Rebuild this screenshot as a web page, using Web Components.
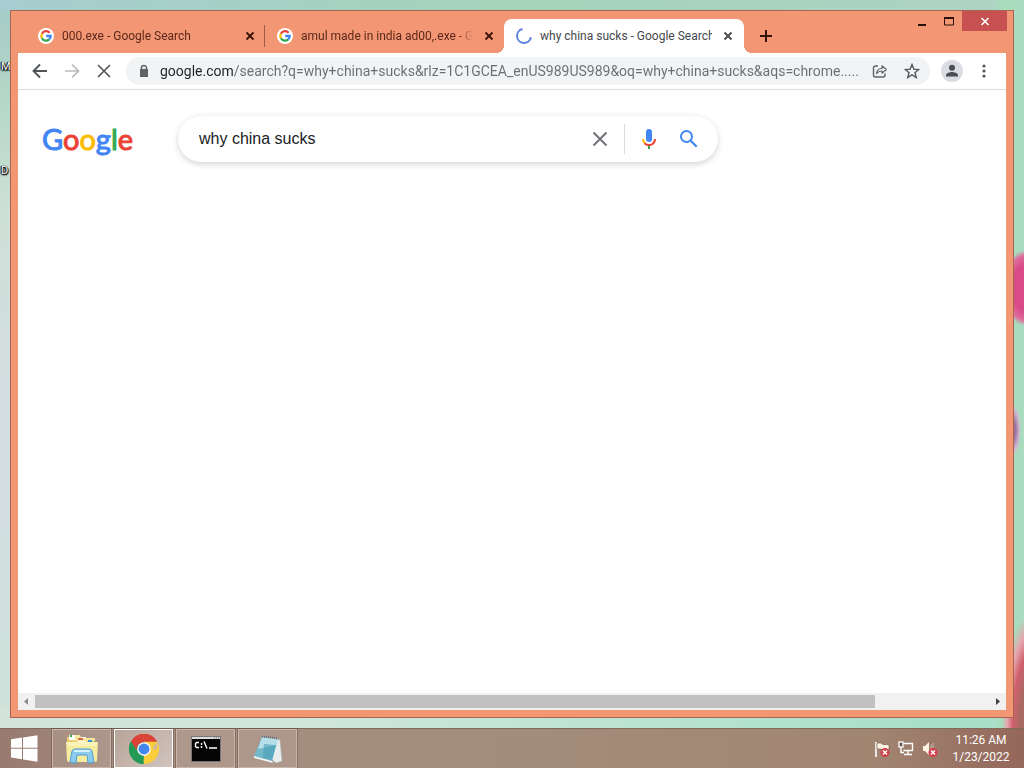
<!DOCTYPE html>
<html lang="en">
<head>
<meta charset="utf-8">
<title>why china sucks - Google Search</title>
<style>
html,body{margin:0;height:100%}
body{font-family:Roboto,"Open Sans",sans-serif;font-size:12px;color:#202124;overflow:hidden}
</style>
</head>
<body>
<desk-top>
  <desk-label slot="labels" style="--row:58px">M</desk-label>
  <desk-label slot="labels" style="--row:162px">D</desk-label>
  <browser-window>
    <browser-tab slot="tabs"><ui-icon slot="icon" name="g"></ui-icon>000.exe - Google Search</browser-tab>
    <browser-tab slot="tabs"><ui-icon slot="icon" name="g"></ui-icon>amul made in india ad00,.exe - Google Search</browser-tab>
    <browser-tab slot="tabs" active><ui-icon slot="icon" name="spinner"></ui-icon>why china sucks - Google Search</browser-tab>
    <tool-bar slot="toolbar"></tool-bar>
    <search-page></search-page>
    <scroll-strip slot="scroll"></scroll-strip>
  </browser-window>
  <task-bar slot="taskbar">
    <task-button><ui-icon name="explorer"></ui-icon></task-button>
    <task-button active><ui-icon name="chrome"></ui-icon></task-button>
    <task-button><ui-icon name="cmd"></ui-icon></task-button>
    <task-button><ui-icon name="notepad"></ui-icon></task-button>
    <ui-icon slot="tray" name="flag"></ui-icon>
    <ui-icon slot="tray" name="network"></ui-icon>
    <ui-icon slot="tray" name="speaker"></ui-icon>
    <task-clock slot="clock"></task-clock>
  </task-bar>
</desk-top>
<script>
const badge = '<circle cx="11" cy="11.500" r="4.500" fill="#d2404c"/><path d="M9 9.500l4 4M13 9.500l-4 4" stroke="#fff" stroke-width="1.400"/>';
// name: [width, height, viewBox, shapes]
const ICONS = {
  g:[16,16,'0 0 16 16','<circle cx="8" cy="8" r="8" fill="#fff"/><g fill="none" stroke-width="2.300"><path d="M11.600 4.800A4.700 4.700 0 0 0 3.900 5.700" stroke="#ea4335"/><path d="M3.900 5.700a4.700 4.700 0 0 0 0 4.600" stroke="#fbbc05"/><path d="M3.900 10.300a4.700 4.700 0 0 0 7.300 1.100" stroke="#34a853"/><path d="M11.200 11.400A4.700 4.700 0 0 0 12.700 8H8.200" stroke="#4285f4"/></g>'],
  spinner:[16,16,'0 0 16 16','<path d="M6.500 1.100A7 7 0 1 0 14.900 9.200" fill="none" stroke="#5b83dc" stroke-width="2"/>'],
  close:[16,16,'0 0 16 16','<path d="M4.500 4.500l7 7M11.500 4.500l-7 7" stroke="currentColor" stroke-width="1.800"/>'],
  plus:[16,16,'0 0 16 16','<path d="M8 2v12M2 8h12" stroke="#33130c" stroke-width="2"/>'],
  back:[20,20,'0 0 20 20','<path d="M17 10H4M10 3.500L3.500 10l6.500 6.500" fill="none" stroke="#505357" stroke-width="1.900"/>'],
  forward:[20,20,'0 0 20 20','<path d="M3 10h13M10 3.500l6.500 6.500L10 16.500" fill="none" stroke="#b9bbbd" stroke-width="1.700"/>'],
  stop:[20,20,'0 0 20 20','<path d="M4 4l12 12M16 4L4 16" stroke="#54575b" stroke-width="1.700"/>'],
  lock:[16,16,'0 0 16 16','<path d="M4 6h8v8H4z" fill="#5f6368"/><path d="M5.500 7V5a2.500 2.500 0 0 1 5 0v2" fill="none" stroke="#5f6368" stroke-width="1.500"/>'],
  share:[16,16,'0 0 16 16','<path d="M6 3H3.500A2 2 0 0 0 1.500 5v7a2 2 0 0 0 2 2h7.500a2 2 0 0 0 2-2v-1.500" fill="none" stroke="#5f6368" stroke-width="1.400"/><path d="M4.500 10.500c.5-3.500 2.500-5 5.500-5V2.800L14.300 6.500 10 10.200V8c-2.500 0-4 .7-5.500 2.500z" fill="none" stroke="#5f6368" stroke-width="1.200" stroke-linejoin="round"/>'],
  star:[16,16,'0 0 16 16','<path d="M8 1.600l1.800 4.500 4.900.4-3.700 3.200 1.200 4.800L8 11.900l-4.200 2.600L5 9.700 1.300 6.500l4.900-.4z" fill="none" stroke="#55585c" stroke-width="1.400"/>'],
  person:[22,22,'0 0 22 22','<circle cx="11" cy="11" r="11" fill="#dadce3"/><circle cx="11" cy="7.700" r="3" fill="#4a4d55"/><path d="M5 16.500v-1.200c0-2.200 4-3.200 6-3.200s6 1 6 3.200v1.200z" fill="#4a4d55"/>'],
  dots:[16,16,'0 0 16 16','<g fill="#54575b"><circle cx="8" cy="3" r="1.600"/><circle cx="8" cy="8" r="1.600"/><circle cx="8" cy="13" r="1.600"/></g>'],
  clear:[24,24,'0 0 24 24','<path d="M5.500 5.500l13 13M18.500 5.500l-13 13" stroke="#70757a" stroke-width="2"/>'],
  mic:[24,24,'0 0 24 24','<rect x="9" y="2" width="6" height="13" rx="3" fill="#4285f4"/><path d="M11 18.500h2V22h-2z" fill="#34a853"/><path d="M6 12a6 6 0 0 0 2 4.400" fill="none" stroke="#fbbc04" stroke-width="2"/><path d="M7.700 16.200A6 6 0 0 0 18 12" fill="none" stroke="#ea4335" stroke-width="2"/>'],
  search:[24,24,'0 0 24 24','<circle cx="9.500" cy="9.500" r="5.500" fill="none" stroke="#4285f4" stroke-width="2"/><path d="M13.700 13.700l6 6" stroke="#4285f4" stroke-width="2.200"/>'],
  min:[16,16,'0 0 16 16','<path d="M4 11h8v2H4z" fill="#2a100a"/>'],
  max:[16,16,'0 0 16 16','<path d="M3.500 5v7h9V5z" fill="none" stroke="#2a100a"/><path d="M3 4h10v2H3z" fill="#2a100a"/>'],
  wclose:[16,16,'0 0 16 16','<path d="M4.500 5l7 7M11.500 5l-7 7" stroke="#fff" stroke-width="1.600"/>'],
  windows:[28,28,'0 0 28 28','<path d="M1 4.300l11-1.700v10.200H1zM13 2.400L27.500 .3v12.500H13zM1 13.800h11v10.500L1 22.500zM13 13.800h14.500v12.900L13 24.500z" fill="#fff"/>'],
  explorer:[36,32,'0 0 36 32','<path d="M3 4h6l1 2h20v21H3z" fill="#e9cf6e"/><path d="M5 2h7v5H5zM14 4h8v5h-8z" fill="#fff"/><path d="M11 2h5l1 3h14v3H11z" fill="#f6e89e"/><path d="M6 2h2v2H6z" fill="#2eaf4c"/><path d="M14 5h5v2h-5z" fill="#d06b41"/><path d="M24 7h4v2h-4z" fill="#3c8fd6"/><path d="M2 9h32l-1 18q0 2-2 2H5q-2 0-2-2z" fill="#f6eca0"/><path d="M3 10h30M4 12h28" stroke="#fffad0"/><path d="M9 30l-3-1 2-11q1-2 3-2h14q2 0 3 2l2 11-3 1h-3l-1-8H13l-1 8z" fill="#8dcbed" stroke="#4d9fd2"/><path d="M10 18h16" stroke="#d6f1ff" stroke-width="2"/>'],
  chrome:[30,30,'0 0 48 48','<path d="M24 24L3.200 12A24 24 0 0 1 44.800 12z" fill="#d94436"/><path d="M24 24L3.200 12A24 24 0 0 0 24 48z" fill="#229a55"/><path d="M24 24h20.800V12A24 24 0 0 1 24 48z" fill="#f9cd3c"/><path d="M3.200 12l10.400 18L24 24V12z" fill="#229a55"/><path d="M24 12h20.800L34.400 30 24 24z" fill="#f9cd3c"/><path d="M3.200 12A24 24 0 0 1 44.800 12H24L13.600 18.500 12 26z" fill="#d94436"/><path d="M34.400 30L24 48l-5-14z" fill="#f9cd3c"/><path d="M3.200 12l10.400 18L24 35l-1 13A24 24 0 0 1 3.200 12z" fill="#229a55"/><circle cx="24" cy="24" r="11" fill="#f5f7fa"/><circle cx="24" cy="24" r="8.700" fill="#4387ec"/>'],
  cmd:[30,26,'0 0 30 26','<rect x=".5" y=".5" width="29" height="25" fill="#050505" stroke="#777"/><path d="M1 1h28v2H1z" fill="#ddd"/><path d="M23 2h5" stroke="#666" stroke-dasharray="1 1"/><path d="M8 6.500H5.500L4.500 7.500v3l1 1H8M10.500 7v2M10.500 10v2M13 5.500l3 7M18 12h8" fill="none" stroke="#fff" stroke-width="1.400"/>'],
  notepad:[32,30,'0 0 32 30','<path d="M24 5l4 1 2 21-6 2-5-4z" fill="#e8eef0" stroke="#a7b4b8" stroke-width=".6"/><path d="M10 3l16 2-6 22L2 22z" fill="#71b8cb"/><path d="M10 3l16 2-2 6L6 15z" fill="#b6dfe9"/><path d="M12 10l12 1-4 15-9-2z" fill="#4b9db7" opacity=".6"/><path d="M2 22l18 5 1 2L2 24z" fill="#edf4f5"/><path d="M10 2.500l16 2" stroke="#667" stroke-width="2" stroke-dasharray="1 1"/>'],
  flag:[16,16,'0 0 16 16','<path d="M2 1v15" stroke="#fff" stroke-width="1.600"/><path d="M3 2h4l2 1.500h6V9H8L7 8H3z" fill="#fff2e4" stroke="#654b40" stroke-width=".6"/>'+badge],
  network:[16,16,'0 0 16 16','<path d="M5.500 2.500h9v7h-9M10 10v3M6 13.500h8M3 6v5.500h3" fill="none" stroke="#fff" stroke-width="1.400"/><rect x="1" y="1" width="4" height="5" fill="#6d554a" stroke="#fff" stroke-width="1.300"/>'],
  speaker:[16,16,'0 0 16 16','<path d="M1 5h2l4-4v13l-4-4H1z" fill="#fff2e4"/><path d="M9 3.500v9M11 2v5" stroke="#c6b5aa"/>'+badge],
  left:[17,17,'0 0 17 17','<path d="M10 5v7L6 8.500z" fill="#8f8f8f"/>'],
  right:[17,17,'0 0 17 17','<path d="M7 5v7l4-3.500z" fill="#404040"/>']
};

function define(name, css, html, setup){
  const tpl = document.createElement('template');
  tpl.innerHTML = `<style>:host,*{box-sizing:border-box}button{font:inherit;border:0;padding:0;background:none;display:grid;place-items:center}${css}</style>${html}`;
  customElements.define(name, class extends HTMLElement{
    constructor(){ super(); this.attachShadow({mode:'open'}).append(tpl.content.cloneNode(true)); }
    connectedCallback(){ if(setup) setup(this); }
  });
}

define('ui-icon', ':host{display:block;flex:none;line-height:0}svg{display:block}', '<span></span>', el => {
  const [w,h,box,shapes] = ICONS[el.getAttribute('name')];
  el.shadowRoot.querySelector('span').innerHTML = `<svg width="${w}" height="${h}" viewBox="${box}" aria-hidden="true">${shapes}</svg>`;
});

define('desk-top', `
:host{display:grid;grid-template-rows:minmax(0,1fr) 40px;height:100vh}
main{position:relative;display:grid;padding:10px;overflow:hidden;
 background:
  radial-gradient(ellipse 24px 38px at calc(100% + 2px) 288px,#d94a88 60%,#dd6d9b 85%,transparent 100%),
  radial-gradient(ellipse 8px 26px at calc(100% - 11px) 430px,#9a6f9c 30%,#cdbcd0 80%,transparent 100%),
  radial-gradient(ellipse 30px 116px at calc(100% + 8px) 100%,#a86a62 40%,#d0606e 65%,#e6a5ac 82%,transparent 100%),
  linear-gradient(90deg,transparent 0 97%,#a8dcbb 98%,#a9dcc0),
  linear-gradient(90deg,#d3e3da,#cfe6dc 30%,#a9e0cb 90%) 0 100%/100% 20px no-repeat,
  linear-gradient(90deg,#a6cdd0,#a4d3b9 50%,#aed3c5) 0 0/100% 12px no-repeat,
  linear-gradient(180deg,#a3cbc6,#b7d8c8 15%,#cfe0d8 30%,#d4dde2 60%,#cfe2da)}
`, `<main><slot name="labels"></slot><slot></slot></main><slot name="taskbar"></slot>`);

define('desk-label', `:host{position:absolute;left:1px;top:var(--row);line-height:17px;font-size:11px;color:#fff;text-shadow:0 0 1px #000,1px 1px 1px #000,0 1px 2px #000,-1px 0 1px #000}`, '<slot></slot>');

define('browser-window', `
:host{position:relative;display:flex;flex-direction:column;min-width:0;border:1px solid #a8654f;background:#f39673;padding:0 7px 7px}
header{display:flex;align-items:flex-end;height:42px;padding-left:8px}
.new{width:28px;height:34px;margin-left:8px}
.controls{display:flex;align-self:flex-start;margin:0 -1px 0 auto}
.controls button{width:27px;height:20px}
.controls .close{width:45px;background:#c75050}
section{flex:1;display:flex;flex-direction:column;min-height:0;background:#fff}
.page{flex:1;min-height:0}
`, `<header><slot name="tabs"></slot><button class="new" aria-label="New tab"><ui-icon name="plus"></ui-icon></button>
<div class="controls"><button aria-label="Minimize"><ui-icon name="min"></ui-icon></button><button aria-label="Maximize"><ui-icon name="max"></ui-icon></button><button class="close" aria-label="Close"><ui-icon name="wclose"></ui-icon></button></div></header>
<section><slot name="toolbar"></slot><div class="page"><slot></slot></div><slot name="scroll"></slot></section>`);

define('browser-tab', `
:host{display:flex;align-items:center;gap:8px;flex:0 1 239px;min-width:0;height:34px;padding:0 6px 0 12px;color:#5b281c;border-right:1px solid #9d5d48;
 border-image:linear-gradient(transparent 7px,#9d5d48 7px 27px,transparent 27px) 1}
:host([active]){position:relative;flex-basis:240px;background:#fff;color:#45484c;border:0;border-radius:8px 8px 0 0;padding-right:8px}
:host(:not([active]):nth-of-type(2)){border-color:transparent;border-image:none}
:host([active])::before,:host([active])::after{content:"";position:absolute;bottom:0;width:8px;height:8px}
:host([active])::before{right:100%;background:radial-gradient(circle at 0 0,transparent 8px,#fff 8px)}
:host([active])::after{left:100%;background:radial-gradient(circle at 100% 0,transparent 8px,#fff 8px)}
.title{flex:1;min-width:0;overflow:hidden;white-space:nowrap;line-height:18px;-webkit-mask:linear-gradient(270deg,transparent,#000 16px)}
:host([active]) .title{-webkit-mask:none}
button{width:16px;height:16px;color:#3b120a}
:host([active]) button{color:#45484c}
`, `<slot name="icon"></slot><div class="title"><slot></slot></div><button aria-label="Close tab"><ui-icon name="close"></ui-icon></button>`);

define('tool-bar', `
:host{display:flex;align-items:center;gap:4px;height:37px;padding:0 8px;border-bottom:1px solid #dadce0}
button{width:28px;height:28px;flex:none}
form{flex:1;min-width:0;display:flex;align-items:center;gap:4px;height:28px;margin:0 4px;padding:0 4px 0 10px;border-radius:14px;background:#f1f3f4}
input{flex:1;min-width:0;height:28px;margin:0 0 0 4px;padding:0;border:0;outline:0;font:14px Roboto,sans-serif;
 color:transparent;background:linear-gradient(90deg,#202124 73px,#6a6d71 73px);-webkit-background-clip:text;background-clip:text}
`, `<button aria-label="Back"><ui-icon name="back"></ui-icon></button><button aria-label="Forward"><ui-icon name="forward"></ui-icon></button><button aria-label="Stop"><ui-icon name="stop"></ui-icon></button>
<form><ui-icon name="lock"></ui-icon><input aria-label="Address" value="google.com/search?q=why+china+sucks&amp;rlz=1C1GCEA_enUS989US989&amp;oq=why+china+sucks&amp;aqs=chrome....."><button type="button" aria-label="Share"><ui-icon name="share"></ui-icon></button><button type="button" aria-label="Bookmark"><ui-icon name="star"></ui-icon></button></form>
<button aria-label="Profile"><ui-icon name="person"></ui-icon></button><button aria-label="Menu"><ui-icon name="dots"></ui-icon></button>`);

define('search-page', `
:host{display:flex;align-items:center;padding:26px 24px}
a{flex:0 0 136px;font:29px/44px "Lato",sans-serif;text-decoration:none;-webkit-text-stroke:1px}
.b{color:#4285f4}.r{color:#ea4335}.y{color:#fbbc05}.n{color:#34a853}
form{flex:0 1 540px;min-width:0;display:flex;align-items:center;height:46px;padding:0 9px 0 21px;border-radius:23px;background:#fff;box-shadow:0 2px 6px rgba(32,33,36,.2)}
input{flex:1;min-width:0;height:34px;padding:0;border:0;outline:0;background:none;color:#202124;font:16px "Liberation Sans",Arial,sans-serif}
button{width:40px;height:40px;flex:none}
i{width:1px;height:30px;margin:0 4px;background:#dadce0}
`, `<a href="#" aria-label="Google"><span class="b">G</span><span class="r">o</span><span class="y">o</span><span class="b">g</span><span class="n">l</span><span class="r">e</span></a>
<form><input aria-label="Search" value="why china sucks"><button type="button" aria-label="Clear"><ui-icon name="clear"></ui-icon></button><i></i><button type="button" aria-label="Search by voice"><ui-icon name="mic"></ui-icon></button><button type="button" aria-label="Google Search"><ui-icon name="search"></ui-icon></button></form>`);

define('scroll-strip', `
:host{display:flex;height:17px;background:#f1f1f1}
.track{flex:1;display:flex;align-items:center}
.thumb{width:88%;height:13px;background:#c1c1c1}
`, `<button aria-label="Scroll left"><ui-icon name="left"></ui-icon></button><div class="track"><div class="thumb"></div></div><button aria-label="Scroll right"><ui-icon name="right"></ui-icon></button>`);

define('task-bar', `
:host{display:flex;align-items:center;border-top:1px solid #806a5e;background:linear-gradient(90deg,#987a6f,#a58d80 12%,#a38c7a 50%,#a18672 85%,#94675a)}
.start{width:48px;height:39px;margin-right:4px}
nav{display:flex;gap:3px;align-self:stretch}
.tray{display:flex;gap:8px;margin-left:auto}
`, `<button class="start" aria-label="Start"><ui-icon name="windows"></ui-icon></button><nav><slot></slot></nav><div class="tray"><slot name="tray"></slot></div><slot name="clock"></slot>`);

define('task-button', `
:host{display:grid;width:59px}
button{border:1px solid #c8b6ac;background:rgba(255,255,255,.1);box-shadow:0 0 0 1px rgba(80,55,45,.35)}
:host([active]) button{border-color:#fff;background:linear-gradient(135deg,#b8a499,#d0c4bd)}
`, `<button aria-label="App"><slot></slot></button>`);

define('task-clock', `:host{display:block;width:86px;color:#fff;font-size:12px;line-height:17px;text-align:center}time{display:block}`, '<time>11:26 AM</time><time>1/23/2022</time>');
</script>
</body>
</html>
